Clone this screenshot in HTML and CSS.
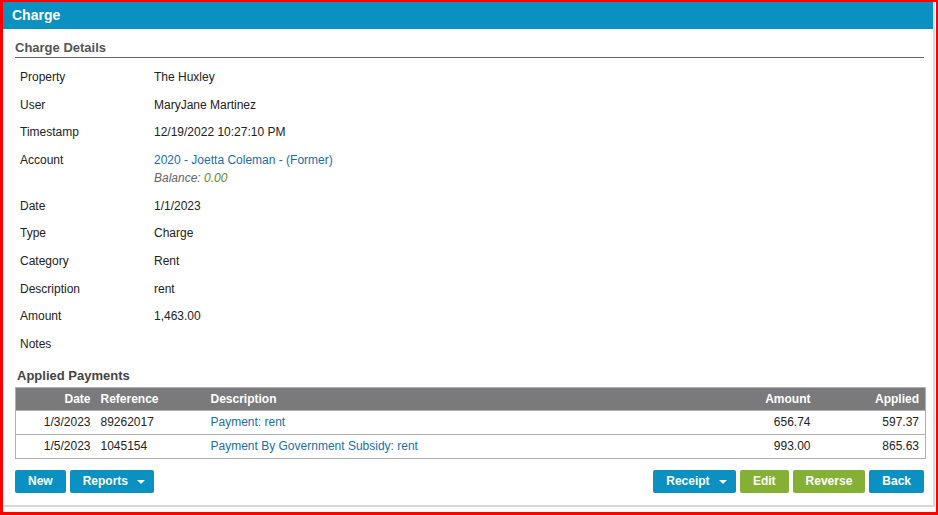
FILE: index.html
```html
<!DOCTYPE html>
<html lang="en">
<head>
<meta charset="UTF-8">
<title>Charge</title>
<link rel="stylesheet" href="styles.css">
</head>
<body>
<div class="frame">
  <div class="panel">
    <div class="panel-title">Charge</div>
    <div class="panel-body">
      <h3 class="section-title">Charge Details</h3>
      <table class="details">
        <tr><td class="label">Property</td><td>The Huxley</td></tr>
        <tr><td class="label">User</td><td>MaryJane Martinez</td></tr>
        <tr><td class="label">Timestamp</td><td>12/19/2022 10:27:10 PM</td></tr>
        <tr>
          <td class="label">Account</td>
          <td><a href="#">2020 - Joetta Coleman - (Former)</a><br><span class="balance">Balance: <span class="balance-val">0.00</span></span></td>
        </tr>
        <tr><td class="label">Date</td><td>1/1/2023</td></tr>
        <tr><td class="label">Type</td><td>Charge</td></tr>
        <tr><td class="label">Category</td><td>Rent</td></tr>
        <tr><td class="label">Description</td><td>rent</td></tr>
        <tr><td class="label">Amount</td><td>1,463.00</td></tr>
        <tr><td class="label">Notes</td><td></td></tr>
      </table>

      <h4 class="sub-title">Applied Payments</h4>
      <table class="grid">
        <colgroup>
          <col class="c-date"><col class="c-ref"><col><col class="c-amt"><col class="c-app">
        </colgroup>
        <thead>
          <tr><th class="num">Date</th><th>Reference</th><th>Description</th><th class="num money">Amount</th><th class="num money">Applied</th></tr>
        </thead>
        <tbody>
          <tr><td class="num">1/3/2023</td><td>89262017</td><td><a href="#">Payment: rent</a></td><td class="num money">656.74</td><td class="num money">597.37</td></tr>
          <tr><td class="num">1/5/2023</td><td>1045154</td><td><a href="#">Payment By Government Subsidy: rent</a></td><td class="num money">993.00</td><td class="num money">865.63</td></tr>
        </tbody>
      </table>

      <div class="actions">
        <div class="left">
          <button class="btn blue">New</button>
          <button class="btn blue dd">Reports <span class="caret"></span></button>
        </div>
        <div class="right">
          <button class="btn blue dd">Receipt <span class="caret"></span></button>
          <button class="btn green">Edit</button>
          <button class="btn green">Reverse</button>
          <button class="btn blue">Back</button>
        </div>
      </div>
    </div>
  </div>
</div>
</body>
</html>
```

FILE: styles.css
```css
html, body {
    margin: 0;
    padding: 0;
}
body {
    font-family: "Liberation Sans", Arial, sans-serif;
    font-size: 12px;
    color: #222;
    background: #fff;
}
.frame {
    width: 938px;
    height: 515px;
    box-sizing: border-box;
    border: 2px solid #f00;
    border-left-width: 3px;
    border-bottom-width: 3px;
    padding: 0 1px 5px 0;
}
.panel {
    height: 100%;
    box-sizing: border-box;
    border-right: 2px solid #d9d9d9;
    border-bottom: 2px solid #d9d9d9;
}
.panel-title {
    background: #0a91c2;
    color: #fff;
    font-weight: bold;
    font-size: 14px;
    height: 27px;
    line-height: 26px;
    padding-left: 9px;
}
.panel-body {
    padding: 0 9px 0 12px;
}
.section-title {
    margin: 10px 0 0 0;
    font-size: 13px;
    color: #555;
    line-height: 17px;
    padding-bottom: 1px;
    border-bottom: 1px solid #666;
}
.details {
    border-collapse: collapse;
    margin-top: 6px;
}
.details td {
    padding: 5px 5px;
    line-height: 17.7px;
    vertical-align: top;
}
.details td.label {
    width: 124px;
}
a {
    color: #1b6ea5;
    text-decoration: none;
}
.balance {
    font-style: italic;
    color: #666;
}
.balance-val {
    color: #5f8a1a;
}
.sub-title {
    margin: 9px 0 3px 2px;
    font-size: 13px;
    color: #444;
    line-height: 16px;
}
.grid {
    width: 911px;
    border-collapse: collapse;
    table-layout: fixed;
    border: 1px solid #b0b0b0;
}
.grid col.c-date { width: 80px; }
.grid col.c-ref { width: 110px; }
.grid col.c-amt { width: 100px; }
.grid col.c-app { width: 109px; }
.grid th {
    background: #7a797b;
    color: #fff;
    text-align: left;
    height: 22px;
    padding: 0 5px;
    font-size: 12px;
}
.grid td {
    height: 23px;
    padding: 0 5px;
    border-top: 1px solid #b0b0b0;
}
.grid .num {
    text-align: right;
}
.grid .money {
    padding-right: 6px;
}
.actions {
    display: flex;
    justify-content: space-between;
    margin-top: 11px;
    padding-right: 0;
}
.left, .right {
    display: flex;
    gap: 4px;
}
.btn {
    font-family: inherit;
    font-size: 12px;
    font-weight: bold;
    color: #fff;
    border: none;
    border-radius: 2px;
    height: 23px;
    padding: 0 13px;
    cursor: pointer;
}
.btn.dd {
    padding-right: 9px;
}
.btn.blue { background: #0a91c2; }
.btn.green { background: #84b135; }
.caret {
    display: inline-block;
    width: 0;
    height: 0;
    margin-left: 6px;
    vertical-align: middle;
    border-left: 4px solid transparent;
    border-right: 4px solid transparent;
    border-top: 4px solid #fff;
}
```
